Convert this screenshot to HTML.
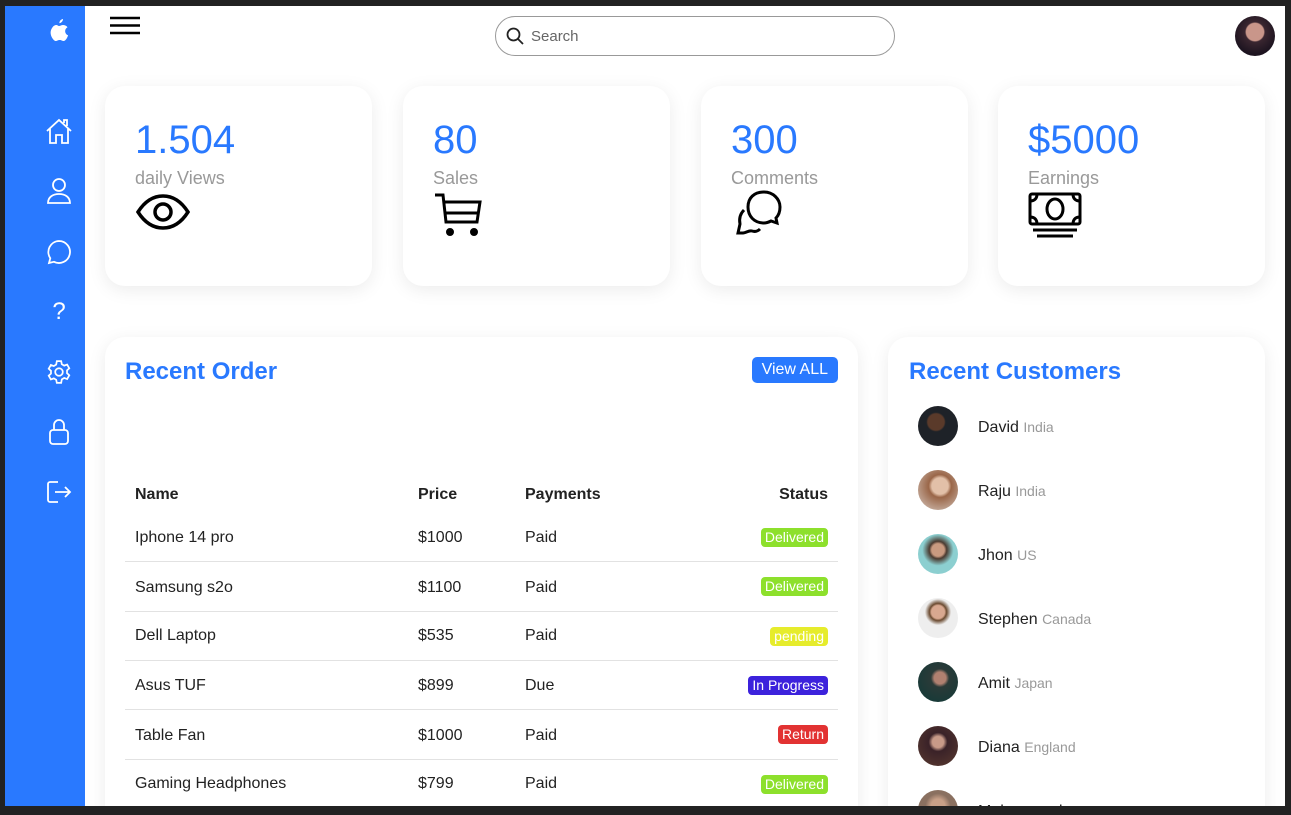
<!DOCTYPE html>
<html><head><meta charset="utf-8"><style>
*{box-sizing:border-box;margin:0;padding:0}
body{width:1291px;height:815px;background:#222;font-family:"Liberation Sans",Arial,sans-serif;overflow:hidden;position:relative}
#app{position:absolute;left:5px;top:6px;width:1280px;height:800px;background:#fff;overflow:hidden}
#side{position:absolute;left:0;top:0;width:80px;height:800px;background:#2979ff}
.si{position:absolute;left:54px;transform:translate(-50%,-50%)}
.card{position:absolute;background:#fff;border-radius:20px;box-shadow:0 4px 18px rgba(0,0,0,.08)}
.num{position:absolute;left:30px;top:32px;font-size:40px;color:#2979ff}
.lbl{position:absolute;left:30px;top:82px;font-size:18px;color:#999}
.ic{position:absolute;left:30px;top:106px}
h2{position:absolute;font-size:24px;color:#2979ff;font-weight:bold}
.th,.td{position:absolute;font-size:16px;color:#222}
.th{font-weight:bold}
.sep{position:absolute;left:20px;width:713px;height:1px;background:#e2e2e2}
.b{position:absolute;right:30px;font-size:14px;color:#fff;padding:1px 4px;border-radius:4px;line-height:17px}
.cu{position:absolute;left:30px;width:40px;height:40px;border-radius:50%}
.cn{position:absolute;left:90px;font-size:16px;color:#222}
.cn span{font-size:14px;color:#999}
</style></head><body><div id="app">
<div id="side">
<svg class="si" style="top:26px" width="24" height="27" viewBox="0 0 24 26"><path fill="#fff" d="M16 0c0 2-1.5 4-3.6 4.2C12.3 2 14 .3 16 0zM12 7c1.2 0 2.6-1.1 4.3-1 2 .1 3.4 1 4.2 2.3-3.5 2-2.9 6.8.6 8.1-.8 2.4-2.6 5.6-4.5 5.6-1.6 0-2-1-3.9-1s-2.5 1-4 1c-2.1 0-6.7-6.3-4.5-11.4C5.8 6.9 7.9 6 9.3 6c1.1 0 2 1 2.7 1z"/></svg>
<svg class="si" style="top:125px" width="28" height="28" viewBox="0 0 28 28" fill="none" stroke="#fff" stroke-width="1.8"><path d="M2 14 14 3l12 11M5 11v15h6v-8h6v8h6V11M19 6V3h3v6"/></svg>
<svg class="si" style="top:185px" width="26" height="28" viewBox="0 0 26 28" fill="none" stroke="#fff" stroke-width="1.8"><circle cx="13" cy="8" r="6"/><path d="M2 26c0-6 5-9 11-9s11 3 11 9z"/></svg>
<svg class="si" style="top:246px" width="26" height="26" viewBox="0 0 26 26" fill="none" stroke="#fff" stroke-width="1.8"><path d="M13 2a11 11 0 1 1-5 20.8L3 24l1.3-4.8A11 11 0 0 1 13 2z"/></svg>
<div class="si" style="top:306px;color:#fff;font-size:24px">?</div>
<svg class="si" style="top:366px" width="26" height="26" viewBox="0 0 24 24" fill="none" stroke="#fff" stroke-width="1.6"><circle cx="12" cy="12" r="3.5"/><path d="M10 2h4l.6 2.8 2.2 1.3 2.7-1 2 3.5-2.1 1.9v2.6l2.1 1.9-2 3.5-2.7-1-2.2 1.3L14 22h-4l-.6-2.8-2.2-1.3-2.7 1-2-3.5 2.1-1.9V10.9L2.5 9l2-3.5 2.7 1 2.2-1.3z"/></svg>
<svg class="si" style="top:426px" width="22" height="28" viewBox="0 0 22 28" fill="none" stroke="#fff" stroke-width="1.8"><rect x="2" y="12" width="18" height="14" rx="3"/><path d="M6 12V7a5 5 0 0 1 10 0v5"/></svg>
<svg class="si" style="top:486px" width="26" height="24" viewBox="0 0 26 24" fill="none" stroke="#fff" stroke-width="1.8"><path d="M12 2H4a2 2 0 0 0-2 2v16a2 2 0 0 0 2 2h8M9 12h15M19 7l5 5-5 5"/></svg>
</div>
<svg style="position:absolute;left:105px;top:10px" width="30" height="20"><path d="M0 2h30M0 9.5h30M0 17h30" stroke="#000" stroke-width="2.4"/></svg>
<div style="position:absolute;left:490px;top:10px;width:400px;height:40px;border:1px solid #999;border-radius:20px"><svg style="position:absolute;left:10px;top:10px" width="18" height="18" fill="none" stroke="#222" stroke-width="1.8"><circle cx="7.5" cy="7.5" r="6"/><path d="M12 12l5 5"/></svg><span style="position:absolute;left:35px;top:11px;font-size:15px;color:#666">Search</span></div>
<div style="position:absolute;left:1230px;top:10px;width:40px;height:40px;border-radius:50%;background:radial-gradient(circle at 50% 40%,#c9968a 0 28%,#3a2630 32%,#1d1420 70%)"></div>

<div class="card" style="left:100px;top:80px;width:267px;height:200px"><div class="num">1.504</div><div class="lbl">daily Views</div><svg class="ic" width="56" height="40" viewBox="0 0 56 40" fill="none" stroke="#000" stroke-width="3.5"><path d="M3 20C10 9 18 4 28 4s18 5 25 16c-7 11-15 16-25 16S10 31 3 20z"/><circle cx="28" cy="20" r="8"/></svg></div>
<div class="card" style="left:398px;top:80px;width:267px;height:200px"><div class="num">80</div><div class="lbl">Sales</div><svg class="ic" width="50" height="46" viewBox="0 0 50 46" fill="none" stroke="#000" stroke-width="3"><path d="M2 3h8l3 27h31l3-20H11"/><path d="M13 21h31"/><circle cx="17" cy="40" r="2.5" fill="#000"/><circle cx="41" cy="40" r="2.5" fill="#000"/></svg></div>
<div class="card" style="left:696px;top:80px;width:267px;height:200px"><div class="num">300</div><div class="lbl">Comments</div><svg class="ic" style="left:32px;top:104px" width="54" height="52" viewBox="0 0 54 52" fill="none" stroke="#000" stroke-width="3"><path d="M31 2c9 0 16 7 16 15 0 5-2 9-4 11l1 5-6-2c-2 1-5 2-7 2-10 0-16-7-16-16S21 2 31 2z"/><path d="M11 20c-4 4-5 9-4 14l-2 9h5c3 0 6-3 9-2 3 1 6 0 8-2"/></svg></div>
<div class="card" style="left:993px;top:80px;width:267px;height:200px"><div class="num">$5000</div><div class="lbl">Earnings</div><svg class="ic" width="54" height="46" viewBox="0 0 54 46" fill="none" stroke="#000" stroke-width="3"><rect x="2" y="2" width="50" height="30" rx="2"/><ellipse cx="27" cy="17" rx="8" ry="10"/><path d="M2 9c5 0 7-3 7-7M45 2c0 4 2 7 7 7M2 25c5 0 7 3 7 7M45 32c0-4 2-7 7-7M5 38h44M9 44h36"/></svg></div>

<div class="card" style="left:100px;top:331px;width:753px;height:500px">
<h2 style="left:20px;top:21px">Recent Order</h2>
<div style="position:absolute;right:20px;top:20px;background:#2979ff;color:#fff;font-size:16px;padding:4px 10px;border-radius:5px">View ALL</div>
<div class="th" style="left:30px;top:149px">Name</div><div class="th" style="left:313px;top:149px">Price</div><div class="th" style="left:420px;top:149px">Payments</div><div class="th" style="right:30px;top:149px">Status</div>
<div class="td" style="left:30px;top:192px">Iphone 14 pro</div><div class="td" style="left:313px;top:192px">$1000</div><div class="td" style="left:420px;top:192px">Paid</div><div class="b" style="top:191px;background:#8de02c">Delivered</div>
<div class="sep" style="top:224px"></div>
<div class="td" style="left:30px;top:242px">Samsung s2o</div><div class="td" style="left:313px;top:242px">$1100</div><div class="td" style="left:420px;top:242px">Paid</div><div class="b" style="top:240px;background:#8de02c">Delivered</div>
<div class="sep" style="top:274px"></div>
<div class="td" style="left:30px;top:290px">Dell Laptop</div><div class="td" style="left:313px;top:290px">$535</div><div class="td" style="left:420px;top:290px">Paid</div><div class="b" style="top:290px;background:#e6ec2c">pending</div>
<div class="sep" style="top:323px"></div>
<div class="td" style="left:30px;top:340px">Asus TUF</div><div class="td" style="left:313px;top:340px">$899</div><div class="td" style="left:420px;top:340px">Due</div><div class="b" style="top:339px;background:#3c22dc">In Progress</div>
<div class="sep" style="top:372px"></div>
<div class="td" style="left:30px;top:390px">Table Fan</div><div class="td" style="left:313px;top:390px">$1000</div><div class="td" style="left:420px;top:390px">Paid</div><div class="b" style="top:388px;background:#e23232">Return</div>
<div class="sep" style="top:422px"></div>
<div class="td" style="left:30px;top:438px">Gaming Headphones</div><div class="td" style="left:313px;top:438px">$799</div><div class="td" style="left:420px;top:438px">Paid</div><div class="b" style="top:438px;background:#8de02c">Delivered</div>
</div>

<div class="card" style="left:883px;top:331px;width:377px;height:500px">
<h2 style="left:21px;top:21px">Recent Customers</h2>
<div class="cu" style="top:69px;background:radial-gradient(circle at 45% 40%,#5a3a2a 0 25%,#1e2228 30%)"></div><div class="cn" style="top:82px">David <span>India</span></div>
<div class="cu" style="top:133px;background:radial-gradient(circle at 55% 40%,#e2c0a8 0 25%,#9a6648 35%,#d8ccc4)"></div><div class="cn" style="top:146px">Raju <span>India</span></div>
<div class="cu" style="top:197px;background:radial-gradient(circle at 50% 40%,#c99a80 0 20%,#4a3a30 28%,#8ccfd0 50%)"></div><div class="cn" style="top:210px">Jhon <span>US</span></div>
<div class="cu" style="top:261px;background:radial-gradient(circle at 50% 35%,#d8a890 0 20%,#6a4a30 26%,#eee 40%)"></div><div class="cn" style="top:274px">Stephen <span>Canada</span></div>
<div class="cu" style="top:325px;background:radial-gradient(circle at 55% 40%,#b08070 0 18%,#2a3a38 28%,#0f3a38)"></div><div class="cn" style="top:338px">Amit <span>Japan</span></div>
<div class="cu" style="top:389px;background:radial-gradient(circle at 50% 40%,#c89a88 0 18%,#3a2228 30%,#5a3a30)"></div><div class="cn" style="top:402px">Diana <span>England</span></div>
<div class="cu" style="top:453px;background:radial-gradient(circle at 50% 40%,#c8a088 0 22%,#8a7060 40%)"></div><div class="cn" style="top:466px">Mohammad <span></span></div>
</div>
</div></body></html>
